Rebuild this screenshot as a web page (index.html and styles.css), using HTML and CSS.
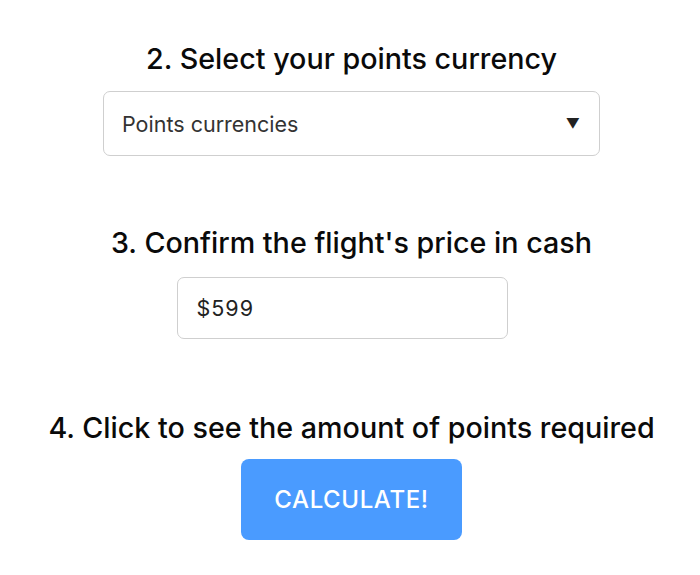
FILE: index.html
```html
<!DOCTYPE html>
<html lang="en">
<head>
<meta charset="utf-8">
<title>Points calculator</title>
<link rel="stylesheet" href="styles.css">
</head>
<body>
<main class="form">
  <section class="step step-currency">
    <h2 class="step-title">2. Select your points currency</h2>
    <div class="select" role="combobox" aria-expanded="false">
      <span class="select-label">Points currencies</span>
      <span class="select-arrow">▼</span>
    </div>
  </section>
  <section class="step step-price">
    <h2 class="step-title">3. Confirm the flight's price in cash</h2>
    <input class="price-input" type="text" value="$599">
  </section>
  <section class="step step-calc">
    <h2 class="step-title">4. Click to see the amount of points required</h2>
    <button class="calc-btn" type="button">CALCULATE!</button>
  </section>
</main>
</body>
</html>
```
FILE: styles.css
```css
* { box-sizing: border-box; }
html, body {
  margin: 0;
  padding: 0;
  background: #fff;
}
body {
  font-family: Inter, "Open Sans", sans-serif;
  color: #111;
}
.form {
  display: flex;
  flex-direction: column;
  align-items: center;
  padding-top: 42px;
  padding-left: 3px;
}
.step {
  display: flex;
  flex-direction: column;
  align-items: center;
}
.step-price { margin-top: 70px; }
.step-calc { margin-top: 72px; }
.step-title {
  margin: 0;
  font-size: 28.7px;
  line-height: 34px;
  font-weight: 500;
  color: #0a0a0a;
  white-space: nowrap;
}
.select {
  margin-top: 15px;
  width: 497px;
  height: 65px;
  border: 1px solid #cfcfcf;
  border-radius: 7px;
  display: flex;
  align-items: center;
  justify-content: space-between;
  padding: 0 19px 0 18px;
  font-size: 21.5px;
  color: #333;
}
.select-arrow {
  font-size: 14px;
  color: #222;
}
.price-input {
  margin-top: 17px;
  margin-right: 17px;
  width: 331px;
  height: 62px;
  border: 1px solid #cfcfcf;
  border-radius: 7px;
  padding: 0 18px;
  font-family: inherit;
  font-size: 21.5px;
  letter-spacing: 1px;
  color: #222;
  background: #fff;
}
.calc-btn {
  margin-top: 14px;
  width: 221px;
  height: 81px;
  border: none;
  border-radius: 8px;
  background: #4a9bff;
  color: #fff;
  font-family: inherit;
  font-size: 24px;
  font-weight: 500;
  letter-spacing: 0.6px;
}
```
